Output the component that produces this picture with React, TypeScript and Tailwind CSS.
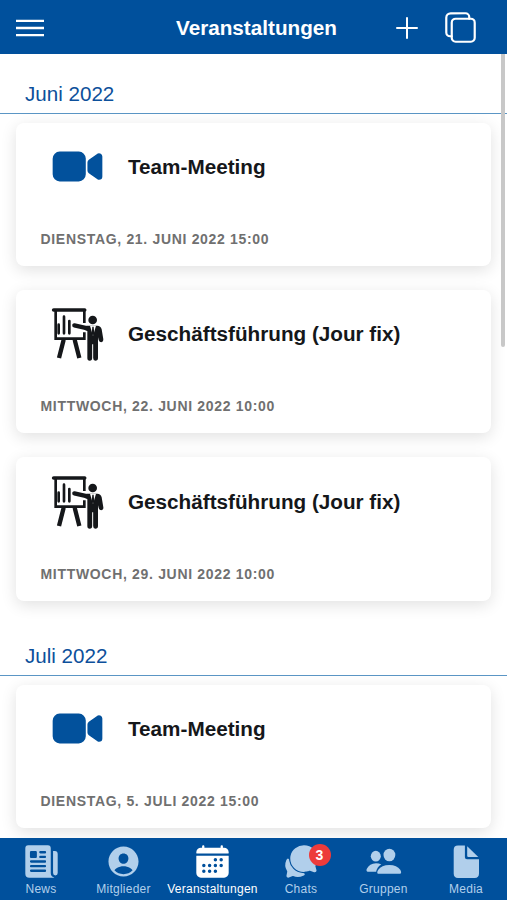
import type { ReactNode } from "react";
import {
  IoCalendar,
  IoChatbubbles,
  IoCopyOutline,
  IoNewspaper,
  IoPersonCircle,
  IoVideocam,
} from "react-icons/io5";

function PresentationIcon() {
  return (
    <svg viewBox="0 0 180 180" className="-mt-[1px] ml-[3px] size-[60px] shrink-0" fill="#15171a" stroke="#15171a">
      <path d="M14 21H107" strokeWidth="11" strokeLinecap="round" />
      <path d="M20 24V107H106V88M106 24V60" fill="none" strokeWidth="8" />
      <path d="M29 65V91M45 41V91M61 54V91" strokeWidth="8" strokeLinecap="round" />
      <path d="M44 110L30 165M77 110L91 165" strokeWidth="13" />
      <circle cx="131" cy="51" r="13" stroke="none" />
      <path d="M76 67L116 76" strokeWidth="13" strokeLinecap="round" />
      <path
        d="M113 68H145Q155 68 158 79L163 109Q164 116 157 118Q151 118 149 111L147 103V165Q147 173 139 173Q132.500 173 132.500 165V124H129.500V165Q129.500 173 122 173Q115 173 115 165V84L106 80Z"
        stroke="none"
      />
      <path d="M123 68L132 99L141 68Z" fill="#fff" stroke="none" />
      <path d="M130 71H134L136 92L132 98L128 92Z" stroke="none" />
    </svg>
  );
}

function PeopleIcon() {
  return (
    <svg viewBox="0 0 37 37" className="size-[37px]" fill="currentColor">
      <ellipse cx="10.8" cy="13.2" rx="5" ry="5.4" />
      <ellipse cx="24.4" cy="12" rx="5.9" ry="6.3" />
      <path d="M12.8 30.7Q11.500 29.500 13.300 26.700Q16.500 22.100 24.300 22Q32 22.100 35.200 26.700Q37 29.500 35.400 30.700Z" />
      <path d="M11.2 28.8H2.600Q.7 28 2 25.600Q4.300 20.500 11 20.200Q14 20.200 16.300 21.400Q12 23.700 11.200 28.800Z" />
    </svg>
  );
}

function DocumentIcon() {
  return (
    <svg viewBox="0 0 37 37" className="size-[37px]" fill="currentColor">
      <path d="M16.9 2.6H10Q5.7 2.6 5.7 7V30.6Q5.7 35 10 35H26.7Q31 35 31 30.6V16.3H19Q16.9 16.3 16.9 14.2Z" />
      <path d="M19.2 3.2V12.8Q19.2 14 20.4 14H30.3Z" />
    </svg>
  );
}

function MonthHeading({ children }: { children: ReactNode }) {
  return (
    <h2 className="flex h-[60px] shrink-0 items-end border-b border-[#5b96c5] pb-[6.5px] pl-[25px] text-[20.6px] leading-[26px] text-[#0d509b]">
      {children}
    </h2>
  );
}

function EventCard({ title, date, meeting = false }: { title: string; date: string; meeting?: boolean }) {
  return (
    <article className="mx-4 mt-[8.5px] mb-[15.5px] flex h-[143.3px] shrink-0 flex-col rounded-lg bg-white px-[24.5px] pb-[19.2px] shadow-[0_4px_16px_rgba(0,0,0,0.12)]">
      <div className="flex h-[87.5px] items-center">
        <div className="ml-[10px] flex w-[53px] shrink-0 justify-center">
          {meeting ? <IoVideocam className="size-[53px] text-[#02519c]" /> : <PresentationIcon />}
        </div>
        <h3 className="ml-[24.5px] text-[20.7px] font-bold whitespace-nowrap text-[#15171a]">{title}</h3>
      </div>
      <p className="mt-auto text-[14px] leading-4 font-bold tracking-[0.68px] whitespace-nowrap text-[#707070]">{date}</p>
    </article>
  );
}

function Tab({ icon, label, className, active = false }: { icon: ReactNode; label: string; className: string; active?: boolean }) {
  return (
    <div className={`flex flex-col items-center pt-[5px] text-[12px] leading-4 tracking-[0.25px] ${active ? "text-white" : "text-[#b1cfeb]"} ${className}`}>
      <div className="relative h-[38px]">{icon}</div>
      <span className="whitespace-nowrap">{label}</span>
    </div>
  );
}

export default function App() {
  return (
    <div className="flex h-[900px] w-[507px] flex-col overflow-hidden bg-white font-['Liberation_Sans',Arial,sans-serif]">
      <header className="flex h-[54.4px] shrink-0 items-center bg-[#00509c] pt-px">
        <svg viewBox="0 0 28 20" className="ml-4 h-[20px] w-[28px] shrink-0" stroke="white" strokeWidth="2.3">
          <path d="M0 2.8H28M0 10H28M0 17.2H28" />
        </svg>
        <h1 className="ml-[132px] w-[162px] text-[20.7px] font-bold whitespace-nowrap text-white">Veranstaltungen</h1>
        <svg viewBox="0 0 22 22" className="ml-[58px] size-[22px]" stroke="white" strokeWidth="2" strokeLinecap="round">
          <path d="M11 1V21M1 11H21" />
        </svg>
        <IoCopyOutline className="ml-[25px] size-[35px] text-white" />
      </header>
      <main className="relative flex min-h-0 flex-1 flex-col overflow-hidden">
        <MonthHeading>Juni 2022</MonthHeading>
        <EventCard meeting title="Team-Meeting" date="DIENSTAG, 21. JUNI 2022 15:00" />
        <EventCard title="Geschäftsführung (Jour fix)" date="MITTWOCH, 22. JUNI 2022 10:00" />
        <EventCard title="Geschäftsführung (Jour fix)" date="MITTWOCH, 29. JUNI 2022 10:00" />
        <MonthHeading>Juli 2022</MonthHeading>
        <EventCard meeting title="Team-Meeting" date="DIENSTAG, 5. JULI 2022 15:00" />
        <div className="absolute top-0 right-[2px] h-[293px] w-[4px] rounded-b-full bg-[#c8c8c8]" />
      </main>
      <nav className="flex h-[62px] shrink-0 bg-[#00509c]">
        <Tab className="w-[82px]" icon={<IoNewspaper className="size-[37px]" />} label="News" />
        <Tab className="w-[83px]" icon={<IoPersonCircle className="size-[37px]" />} label="Mitglieder" />
        <Tab className="w-[95px]" icon={<IoCalendar className="size-[37px]" />} label="Veranstaltungen" active />
        <Tab
          className="w-[82px]"
          icon={
            <>
              <IoChatbubbles className="size-[37px]" />
              <b className="absolute top-[1px] left-[26px] flex size-[22px] items-center justify-center rounded-full bg-[#ed3b3b] text-[14px] tracking-normal text-white">3</b>
            </>
          }
          label="Chats"
        />
        <Tab className="w-[83px]" icon={<PeopleIcon />} label="Gruppen" />
        <Tab className="w-[82px]" icon={<DocumentIcon />} label="Media" />
      </nav>
    </div>
  );
}
